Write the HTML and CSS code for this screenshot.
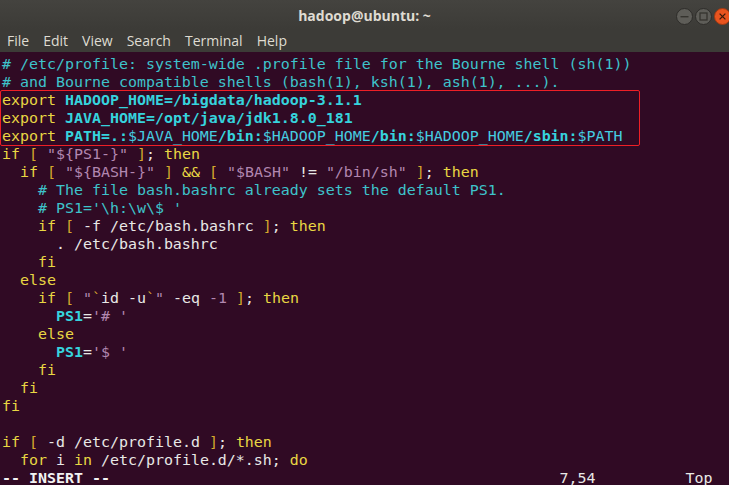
FILE: index.html
```html
<!DOCTYPE html>
<html>
<head>
<meta charset="utf-8">
<link rel="stylesheet" href="styles.css">
</head>
<body>
<div class="window">
  <div class="titlebar">
    <div class="title">hadoop@ubuntu: ~</div>
    <div class="controls">
      <svg class="btn" width="17" height="17" viewBox="0 0 17 17"><circle cx="8.5" cy="8.5" r="8" fill="#5e5d58" stroke="#2e2d2a" stroke-width="1"/><rect x="4.5" y="8" width="8" height="1.4" fill="#35342f"/></svg>
      <svg class="btn" width="17" height="17" viewBox="0 0 17 17"><circle cx="8.5" cy="8.5" r="8" fill="#5e5d58" stroke="#2e2d2a" stroke-width="1"/><rect x="5" y="5" width="7" height="7" fill="none" stroke="#35342f" stroke-width="1.3"/></svg>
      <svg class="btn" width="17" height="17" viewBox="0 0 17 17"><circle cx="8.5" cy="8.5" r="8" fill="#e9541f" stroke="#a33a12" stroke-width="1"/><path d="M5.6 5.6 L11.4 11.4 M11.4 5.6 L5.6 11.4" stroke="#3a1a0c" stroke-width="1.3"/></svg>
    </div>
  </div>
  <div class="menubar">
    <span>File</span><span>Edit</span><span>View</span><span>Search</span><span>Terminal</span><span>Help</span>
  </div>
  <div class="term">
<div class="ln"><span class="c"># /etc/profile: system-wide .profile file for the Bourne shell (sh(1))</span></div>
<div class="ln"><span class="c"># and Bourne compatible shells (bash(1), ksh(1), ash(1), ...).</span></div>
<div class="ln"><span class="k">export</span> <span class="vb">HADOOP_HOME=/bigdata/hadoop-3.1.1</span></div>
<div class="ln"><span class="k">export</span> <span class="vb">JAVA_HOME=/opt/java/jdk1.8.0_181</span></div>
<div class="ln"><span class="k">export</span> <span class="vb">PATH=.:</span><span class="vr">$JAVA_HOME</span><span class="vb">/bin:</span><span class="vr">$HADOOP_HOME</span><span class="vb">/bin:</span><span class="vr">$HADOOP_HOME</span><span class="vb">/sbin:</span><span class="vr">$PATH</span></div>
<div class="ln"><span class="k">if</span> <span class="b">[</span> <span class="s">"${PS1-}"</span> <span class="b">]</span>; <span class="k">then</span></div>
<div class="ln">  <span class="k">if</span> <span class="b">[</span> <span class="s">"${BASH-}"</span> <span class="b">]</span> <span class="k">&amp;&amp;</span> <span class="b">[</span> <span class="s">"$BASH"</span> != <span class="s">"/bin/sh"</span> <span class="b">]</span>; <span class="k">then</span></div>
<div class="ln">    <span class="c"># The file bash.bashrc already sets the default PS1.</span></div>
<div class="ln">    <span class="c"># PS1='\h:\w\$ '</span></div>
<div class="ln">    <span class="k">if</span> <span class="b">[</span> -f /etc/bash.bashrc <span class="b">]</span>; <span class="k">then</span></div>
<div class="ln">      . /etc/bash.bashrc</div>
<div class="ln">    <span class="k">fi</span></div>
<div class="ln">  <span class="k">else</span></div>
<div class="ln">    <span class="k">if</span> <span class="b">[</span> <span class="s">"</span><span class="b">`</span>id -u<span class="b">`</span><span class="s">"</span> -eq <span class="s">-1</span> <span class="b">]</span>; <span class="k">then</span></div>
<div class="ln">      <span class="vb">PS1</span>=<span class="s">'# '</span></div>
<div class="ln">    <span class="k">else</span></div>
<div class="ln">      <span class="vb">PS1</span>=<span class="s">'$ '</span></div>
<div class="ln">    <span class="k">fi</span></div>
<div class="ln">  <span class="k">fi</span></div>
<div class="ln"><span class="k">fi</span></div>
<div class="ln"> </div>
<div class="ln"><span class="k">if</span> <span class="b">[</span> -d /etc/profile.d <span class="b">]</span>; <span class="k">then</span></div>
<div class="ln">  <span class="k">for</span> i <span class="k">in</span> /etc/profile.d/*.sh; <span class="k">do</span></div>
<div class="ln"><span class="mode">-- INSERT --</span>                                                  7,54          Top</div>
    <div class="highlight"></div>
  </div>
</div>
</body>
</html>
```
FILE: styles.css
```css
html, body {
  margin: 0;
  padding: 0;
}
body {
  width: 729px;
  height: 485px;
  overflow: hidden;
  background: #300a24;
}
.window {
  width: 729px;
  height: 485px;
  display: flex;
  flex-direction: column;
  overflow: hidden;
}
.titlebar {
  height: 29px;
  flex: none;
  background: linear-gradient(#44433f, #3c3b37);
  display: grid;
  grid-template-columns: 1fr auto 1fr;
  align-items: center;
  color: #dfdbd2;
  font: bold 14px "Open Sans", sans-serif;
}
.title {
  grid-column: 2;
  padding-top: 1px;
}
.controls {
  grid-column: 3;
  justify-self: end;
  display: flex;
  gap: 2px;
  margin-right: -2px;
  padding-top: 3px;
}
.btn {
  display: block;
}
.menubar {
  height: 23px;
  flex: none;
  background: #3c3b37;
  display: flex;
  align-items: center;
  gap: 14px;
  padding-left: 7px;
  color: #dfdbd2;
  font: 14px "Open Sans", sans-serif;
}
.term {
  flex: 1;
  position: relative;
  padding: 3px 0 0 2px;
  font-family: "DejaVu Sans Mono", monospace;
  font-size: 14.95px;
  line-height: 18px;
  color: #e8e8e6;
}
.ln {
  white-space: pre;
  height: 18px;
}
.c { color: #3ec3cb; }
.k { color: #e9d743; }
.b { color: #d6a82c; }
.s { color: #b287b0; }
.vb { color: #36d3dd; font-weight: bold; }
.vr { color: #45cde0; }
.mode { font-weight: bold; color: #f2f2f2; }
.highlight {
  position: absolute;
  left: 0;
  top: 38px;
  width: 640px;
  height: 56px;
  box-sizing: border-box;
  border: 1px solid #ee1f26;
  border-radius: 2px;
}
```
